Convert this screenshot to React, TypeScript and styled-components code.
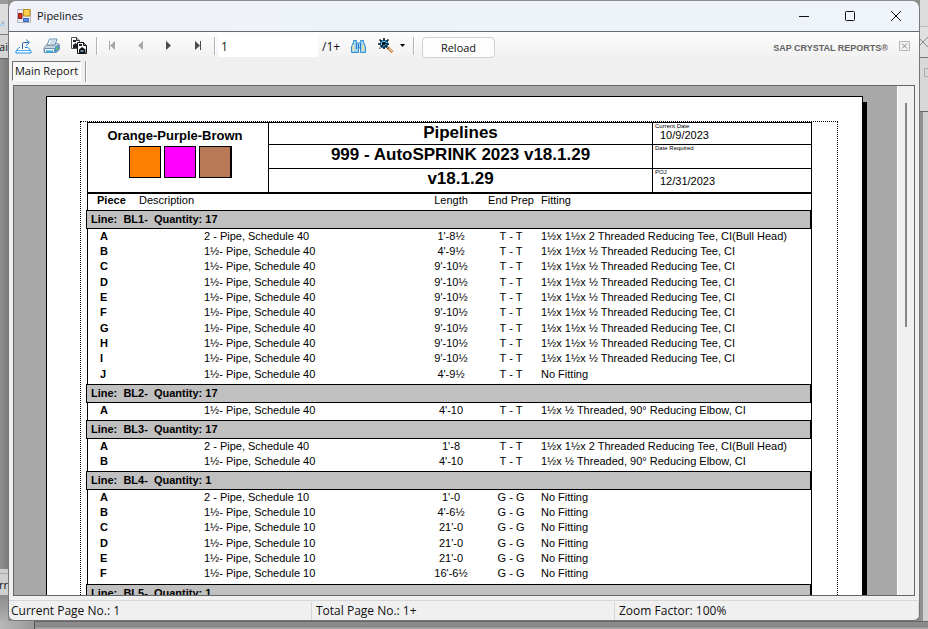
import React from "react";
import styled, { createGlobalStyle } from "styled-components";

const Global = createGlobalStyle`
  *{box-sizing:border-box}
  html,body{margin:0;height:100%}
  body{background:#8d8d8d;font-family:"Open Sans","Noto Sans",sans-serif;font-size:11px;color:#111}
  button,input{font:inherit;color:inherit;margin:0}
`;

const Desktop = styled.div`
  display:grid;
  grid-template-columns:8px minmax(0,1fr) 8px;
  grid-template-rows:minmax(0,1fr) 8px;
  height:100vh;overflow:hidden;
`;
const Strip = styled.div`display:flex;flex-direction:column;overflow:hidden;white-space:nowrap;`;
const Slab = styled.div<{ $h?: number; $bg: string; $line?: string }>`
  flex:${p => (p.$h ? "none" : "1")};
  height:${p => (p.$h ? p.$h + "px" : "auto")};
  background:${p => p.$bg};
  border-bottom:${p => (p.$line ? `1px solid ${p.$line}` : "none")};
  display:flex;align-items:center;overflow:hidden;
`;
const RightAligned = styled(Slab)`justify-content:flex-end;`;
const StripIcon = styled(RightAligned)`padding:8px 3px 0 0;`;
const Floor = styled.div`
  grid-column:1 / -1;display:flex;
  background:linear-gradient(90deg,#b8b8b8,#999 34px,#a4a4a4 36px,#a4a4a4 90%,#bcbcbc);
`;
const FloorPanel = styled.div`
  flex:1;margin-left:34px;border-left:1px solid #555;border-top:1px solid #666;
  background:linear-gradient(#8c8c8c 0 4px,#7f7f7f 4px 5px,#a0a0a0 5px);
`;

const Win = styled.main`
  display:flex;flex-direction:column;min-width:0;min-height:0;
  margin-top:1px;border:1px solid #777;border-top:0;border-radius:8px 8px 6px 6px;
  background:#f0f0f0;overflow:hidden;
`;
const TitleBar = styled.header`
  height:31px;flex:none;display:flex;align-items:center;padding-left:8px;
  background:linear-gradient(90deg,#f0f1f9,#edf3f9 50%,#eff3fa);border-bottom:1px solid #666b70;
`;
const Title = styled.h1`flex:1;margin:0 0 0 6px;font-size:11px;font-weight:400;line-height:16px;`;
const WinButton = styled.button`
  width:46px;height:30px;padding:0;border:0;background:none;display:grid;place-items:center;
`;
const Toolbar = styled.div`
  height:28px;flex:none;display:flex;align-items:center;padding:0 9px 0 0;
  background:linear-gradient(#fdfdfd,#f0f0f0);
`;
const Tool = styled.button<{ $w?: number }>`
  width:${p => p.$w ?? 28}px;height:24px;padding:0;border:0;background:none;flex:none;
  display:flex;align-items:center;justify-content:center;
`;
const Divider = styled.span<{ $before: number; $after: number }>`
  width:2px;height:18px;margin:0 ${p => p.$after}px 0 ${p => p.$before}px;
  border-left:1px solid #b4b4b4;border-right:1px solid #fff;
`;
const PageBox = styled.input`
  width:100px;height:22px;padding:0 3px;border:0;background:#fff;font-size:12px;outline:0;
`;
const PageTotal = styled.span`font-size:12px;margin-left:4px;width:22px;`;
const Reload = styled.button`
  width:73px;height:21px;margin-top:3px;padding:0;border:1px solid #d0d0d0;border-radius:4px;background:#fdfdfd;
  font-size:11px;line-height:18px;
`;
const Brand = styled.span`
  margin:3px 11px 0 auto;font:bold 9px/12px "Liberation Sans",sans-serif;color:#626262;
`;
const Tabs = styled.nav`height:25px;flex:none;display:flex;align-items:flex-start;padding:1px 3px 0;`;
const Tab = styled.button`
  height:20px;width:69px;padding:0;border:1px solid #707070;border-right-color:#fff;border-bottom-color:#fff;background:#f8f8f8;
  font-size:11px;line-height:16px;white-space:nowrap;
`;
const TabEnd = styled.span`width:2px;height:21px;margin-left:4px;border-left:1px solid #999;border-right:1px solid #fff;`;

const Viewer = styled.section`
  flex:1;min-height:0;margin:0 4px;display:flex;border:1px solid #666;background:#a9a9a9;overflow:hidden;
`;
const Canvas = styled.div`flex:1;min-width:0;padding:10px 34px 0 32px;overflow:hidden;`;
const Paper = styled.article`
  border:1px solid #000;background:#fff;padding:24px 24px 0 33px;box-shadow:4px 6px 0 #000;color:#000;
  font-family:"Liberation Sans",Arial,sans-serif;min-height:800px;
`;
const Margins = styled.div`border:1px dotted #000;border-bottom:0;padding:0 25px 0 6px;min-height:760px;`;
const Report = styled.div`border:1px solid #000;border-bottom:0;min-height:740px;`;
const ReportHead = styled.header`
  display:grid;grid-template-columns:180px minmax(0,1fr) 159px;height:71px;border-bottom:2px solid #000;
`;
const Company = styled.div`text-align:center;font:bold 13px/16px "Liberation Sans",sans-serif;padding:5px 6px 0 0;`;
const Swatches = styled.div`display:flex;justify-content:center;gap:3px;margin:2px 0 0 10px;`;
const Swatch = styled.span<{ $c: string; $last?: boolean }>`
  width:${p => (p.$last ? 33 : 32)}px;height:32px;border:1px solid #000;border-right-width:${p => (p.$last ? 2 : 1)}px;background:${p => p.$c};
`;
const HeadRows = styled.div`display:grid;grid-template-rows:21px 24px 24px;border-left:1px solid #000;`;
const HeadTitle = styled.h2`
  margin:0;text-align:center;font-size:17px;line-height:19px;font-weight:700;
  & + &{border-top:1px solid #000}
`;
const DateCell = styled.div`
  line-height:12px;font-size:11px;padding-left:7px;
  & + &{border-top:1px solid #000}
`;
const Tiny = styled.div`font-size:6px;line-height:6px;margin-left:-5px;`;
const Table = styled.table`width:100%;border-collapse:collapse;table-layout:fixed;font-size:11px;`;
const Th = styled.th<{ $center?: boolean; $bold?: boolean; $pad?: number }>`
  height:16px;padding:0 0 4px ${p => p.$pad ?? 0}px;line-height:12px;white-space:nowrap;
  font-weight:${p => (p.$bold ? 700 : 400)};text-align:${p => (p.$center ? "center" : "left")};
`;
const GroupCell = styled.td`padding:0;`;
const Bar = styled.div`
  height:19px;margin-left:-2px;padding-left:4px;border:1px solid #000;background:#c0c0c0;
  font-weight:700;line-height:17px;white-space:pre;
`;
const Line = styled.tr<{ $tall: boolean }>`height:${p => (p.$tall ? 16 : 15)}px;`;
const Td = styled.td<{ $center?: boolean; $bold?: boolean; $pad?: number }>`
  padding:0 0 0 ${p => p.$pad ?? 0}px;line-height:15px;white-space:nowrap;vertical-align:top;
  font-weight:${p => (p.$bold ? 700 : 400)};text-align:${p => (p.$center ? "center" : "left")};
`;
const Gap = styled.td<{ $h: number }>`height:${p => p.$h}px;padding:0;`;
const Col = styled.col<{ $w?: number }>`width:${p => (p.$w ? p.$w + "px" : "auto")};`;
const ScrollTrack = styled.div`width:17px;flex:none;background:#f0f0f0;border-left:1px solid #fff;padding:17px 0 0 7px;`;
const ScrollThumb = styled.div`width:2px;height:224px;background:#858585;`;
const StatusBar = styled.footer`
  flex:none;height:20px;margin-top:4px;border-top:1px solid #d7d7d7;display:grid;
  grid-template-columns:303px 303px 1fr;align-items:center;font-size:12px;line-height:18px;
`;
const StatusCell = styled.span`
  padding-left:2px;border-right:1px solid #d7d7d7;white-space:nowrap;
  & + &{padding-left:4px}
`;

const AppIcon = () => (
  <svg width="14" height="14" viewBox="0 0 14 14">
    <path d="M.5.5h13v13H.5z" fill="#e9e9ee" stroke="#b5b5bd" />
    <path d="M6.500.500h6.500v6.500h-6.500z" fill="#fcd04b" stroke="#b58a1c" />
    <path d="M1.500 4.500h3.500v5h-3.500z" fill="#d2301f" stroke="#8c1b12" />
    <path d="M6.500 9.500h5v3h-5z" fill="#5c8fe8" stroke="#3665c0" />
  </svg>
);
const ExportIcon = () => (
  <svg width="17" height="15" viewBox="0 0 17 15" fill="none">
    <path d="M7.500 9.500V4.500q0-1 1-1h5" stroke="#1f5f9c" />
    <path d="M11 .5l3.500 3-3.500 3" stroke="#1c74c8" />
    <path d="M5 8.500H4L1 12v2h15v-2l-3-3.500H10" stroke="#1f8fec" fill="#fff" />
    <path d="M1 11.500h15" stroke="#4aa9f2" />
    <path d="M7.500 10V6" stroke="#1f5f9c" />
  </svg>
);
const PrintIcon = () => (
  <svg width="17" height="16" viewBox="0 0 17 16">
    <path d="M4 7l2.500-6h7.500l-2 6z" fill="#fff" stroke="#5d92b6" />
    <path d="M7.500 3h5M7 5h5" stroke="#8eb9d4" />
    <path d="M1 10l3-4h1l-.5 1.500h7l2-2h2l1 1v5l-3 3H1z" fill="#c9d6e0" stroke="#8597a8" />
    <path d="M12 8.500l4-2v5l-4 3.500z" fill="#4798c9" />
    <path d="M1.500 10.500h10v4h-10z" fill="#eaf3f8" stroke="#6d93ad" />
    <path d="M3 13.500h7" stroke="#3da8df" strokeWidth="2" />
    <path d="M13 9.500h2v2h-2z" fill="#6fc24c" />
  </svg>
);
const CopyIcon = () => (
  <svg width="18" height="18" viewBox="0 0 18 18">
    <path d="M1.500.500h5l3 3v8h-8z" fill="#fff" stroke="#555" />
    <path d="M3 3h3v2H3z" fill="#1c2026" />
    <path d="M3 8l2.500-2L8 8v3H3z" fill="#1c2026" />
    <path d="M6.500.500v3h3" fill="#bbb" stroke="#333" />
    <path d="M7.500 5.500h6l3 3v8h-9z" fill="#fff" stroke="#111" />
    <path d="M9 7h3v2H9z" fill="#1c2026" />
    <path d="M9 12.500l3-2.500 3.500 2.500V16H9z" fill="#111" />
    <path d="M10.500 14h3" stroke="#86b9dc" strokeWidth="1.500" />
    <path d="M13.500 5.500v3h3" fill="#999" stroke="#111" />
  </svg>
);
const NavIcon = ({ kind, dim }: { kind: "first" | "prev" | "next" | "last"; dim?: boolean }) => (
  <svg width="9" height="10" viewBox="0 0 9 10" fill={dim ? "#a7a7a7" : "#4a4a4a"}>
    {(kind === "first" || kind === "prev") && <path d="M7 0v9L2 4.500z" />}
    {(kind === "next" || kind === "last") && <path d="M2 0v9l5-4.500z" />}
    {kind === "first" && <path d="M1 0h1v9H1z" />}
    {kind === "last" && <path d="M7 0h1v9H7z" />}
  </svg>
);
const FindIcon = () => (
  <svg width="15" height="13" viewBox="0 0 15 13">
    <path d="M.5 12.500V7l2-5V.5h3V2l1 1h2l1-1V.5h3V2l2 5v5.500h-5V8h-2v4.500z" fill="#9fd3f3" stroke="#328fce" />
    <path d="M2.500 5v6M12 5v6" stroke="#e4e3b0" strokeWidth="2" />
    <path d="M5.500 3v6M9.500 3v6M7.500 4v4" stroke="#2877cf" />
  </svg>
);
const ZoomIcon = () => (
  <svg width="16" height="16" viewBox="0 0 16 16">
    <path d="M9.500 9.500l5 4.500" stroke="#b77b3d" strokeWidth="3" />
    <path d="M10.500 10l4 3.500" stroke="#f4c78e" strokeWidth="1.400" />
    <circle cx="6" cy="6" r="4" fill="#5cc4f4" stroke="#2f8fc6" />
    <path d="M6 0v12M0 6h12M1.500 1.500l9 9M10.500 1.500l-9 9" stroke="#07131f" strokeWidth="1.600" strokeDasharray="3 1" />
  </svg>
);
const CloseTabIcon = () => (
  <svg width="11" height="10" viewBox="0 0 11 10" fill="none" stroke="#b4b4b4">
    <path d="M.5.500h10v9H.5z" fill="#f3f3f3" />
    <path d="M3 2.500l5 5M8 2.500l-5 5" stroke="#888" />
  </svg>
);

type Row = [string, string, string, string, string];
type Group = { name: string; qty: number; rows: Row[] };

const P15 = "1½- Pipe, Schedule 40";
const P20 = "2 - Pipe, Schedule 40";
const P15L = "1½- Pipe, Schedule 10";
const TEE = "1½x 1½x ½ Threaded Reducing Tee, CI";
const BULL = "1½x 1½x 2 Threaded Reducing Tee, CI(Bull Head)";
const ELBOW = "1½x ½ Threaded, 90° Reducing Elbow, CI";

const groups: Group[] = [
  {
    name: "BL1", qty: 17,
    rows: [
      ["A", P20, "1'-8½", "T - T", BULL],
      ["B", P15, "4'-9½", "T - T", TEE],
      ...["C", "D", "E", "F", "G", "H", "I"].map((p): Row => [p, P15, "9'-10½", "T - T", TEE]),
      ["J", P15, "4'-9½", "T - T", "No Fitting"],
    ],
  },
  { name: "BL2", qty: 17, rows: [["A", P15, "4'-10", "T - T", ELBOW]] },
  { name: "BL3", qty: 17, rows: [["A", P20, "1'-8", "T - T", BULL], ["B", P15, "4'-10", "T - T", ELBOW]] },
  {
    name: "BL4", qty: 1,
    rows: [
      ["A", "2 - Pipe, Schedule 10", "1'-0", "G - G", "No Fitting"],
      ["B", P15L, "4'-6½", "G - G", "No Fitting"],
      ...["C", "D", "E"].map((p): Row => [p, P15L, "21'-0", "G - G", "No Fitting"]),
      ["F", P15L, "16'-6½", "G - G", "No Fitting"],
    ],
  },
  { name: "BL5", qty: 1, rows: [] },
];

export default function App() {
  return (
    <Desktop>
      <Global />
      <Strip>
        <Slab $h={4} $bg="#9a9a9a" />
        <StripIcon $h={31} $bg="#dcdcdc" $line="#777"><ExportIcon /></StripIcon>
        <RightAligned $h={24} $bg="#d4d4d4" $line="#666">ai</RightAligned>
        <Slab $bg="linear-gradient(90deg,#8f8f8f,#7c7c7c)" />
        <Slab $h={5} $bg="#cfcfcf" $line="#aaa" />
        <RightAligned $h={21} $bg="#cfcfcf">rr</RightAligned>
        <Slab $h={26} $bg="linear-gradient(#8c8c8c,#b0b0b0)" />
      </Strip>
      <Win>
        <TitleBar>
          <AppIcon />
          <Title>Pipelines</Title>
          <WinButton aria-label="Minimize"><svg width="10" height="10" viewBox="0 0 10 10"><path d="M0 5.500h10" stroke="#111" /></svg></WinButton>
          <WinButton aria-label="Maximize"><svg width="10" height="10" viewBox="0 0 10 10"><rect x=".5" y=".5" width="9" height="9" rx="1" fill="none" stroke="#111" /></svg></WinButton>
          <WinButton aria-label="Close"><svg width="10" height="10" viewBox="0 0 10 10"><path d="M0 0l10 10M10 0L0 10" stroke="#111" /></svg></WinButton>
        </TitleBar>
        <Toolbar>
          <Tool aria-label="Export"><ExportIcon /></Tool>
          <Tool aria-label="Print"><PrintIcon /></Tool>
          <Tool aria-label="Copy"><CopyIcon /></Tool>
          <Divider $before={3} $after={0} />
          <Tool aria-label="First page"><NavIcon kind="first" dim /></Tool>
          <Tool aria-label="Previous page"><NavIcon kind="prev" dim /></Tool>
          <Tool $w={29} aria-label="Next page"><NavIcon kind="next" /></Tool>
          <Tool aria-label="Last page"><NavIcon kind="last" /></Tool>
          <Divider $before={3} $after={2} />
          <PageBox aria-label="Page number" defaultValue="1" />
          <PageTotal>/1+</PageTotal>
          <Tool aria-label="Find"><FindIcon /></Tool>
          <Tool $w={40} aria-label="Zoom">
            <ZoomIcon />
            <svg width="12" height="6" viewBox="0 0 12 6"><path d="M6 1h5L8.500 4z" fill="#000" /></svg>
          </Tool>
          <Divider $before={1} $after={7} />
          <Reload>Reload</Reload>
          <Brand>SAP CRYSTAL REPORTS®</Brand>
          <Tool $w={11} aria-label="Close view"><CloseTabIcon /></Tool>
        </Toolbar>
        <Tabs><Tab>Main Report</Tab><TabEnd /></Tabs>
        <Viewer>
          <Canvas>
            <Paper>
              <Margins>
                <Report>
                  <ReportHead>
                    <Company>
                      Orange-Purple-Brown
                      <Swatches><Swatch $c="#ff8000" /><Swatch $c="#ff00ff" /><Swatch $c="#b87957" $last /></Swatches>
                    </Company>
                    <HeadRows>
                      <HeadTitle>Pipelines</HeadTitle>
                      <HeadTitle>999 - AutoSPRINK 2023 v18.1.29</HeadTitle>
                      <HeadTitle>v18.1.29</HeadTitle>
                    </HeadRows>
                    <HeadRows>
                      <DateCell><Tiny>Current Date</Tiny>10/9/2023</DateCell>
                      <DateCell><Tiny>Date Required</Tiny></DateCell>
                      <DateCell><Tiny>POJ</Tiny>12/31/2023</DateCell>
                    </HeadRows>
                  </ReportHead>
                  <Table>
                    <colgroup>
                      <Col $w={51} /><Col $w={282} /><Col $w={60} /><Col $w={60} /><Col />
                    </colgroup>
                    <thead>
                      <tr>
                        <Th $bold $pad={9}>Piece</Th><Th>Description</Th><Th $center>Length</Th><Th $center>End Prep</Th><Th>Fitting</Th>
                      </tr>
                    </thead>
                    {groups.map(g => (
                      <tbody key={g.name}>
                        <tr><GroupCell colSpan={5}><Bar>{`Line:  ${g.name}-  Quantity: ${g.qty}`}</Bar></GroupCell></tr>
                        {g.rows.map((r, i) => (
                          <Line key={r[0]} $tall={i % 3 === 2}>
                            <Td $bold $pad={12}>{r[0]}</Td><Td $pad={65}>{r[1]}</Td><Td $center>{r[2]}</Td><Td $center>{r[3]}</Td><Td>{r[4]}</Td>
                          </Line>
                        ))}
                        <tr><Gap $h={2} colSpan={5} /></tr>
                      </tbody>
                    ))}
                  </Table>
                </Report>
              </Margins>
            </Paper>
          </Canvas>
          <ScrollTrack><ScrollThumb /></ScrollTrack>
        </Viewer>
        <StatusBar>
          <StatusCell>Current Page No.: 1</StatusCell><StatusCell>Total Page No.: 1+</StatusCell><StatusCell>Zoom Factor: 100%</StatusCell>
        </StatusBar>
      </Win>
      <Strip>
        <Slab $h={27} $bg="#dcdcdc" $line="#bbb" />
        <Slab $h={31} $bg="#e0e0e0" $line="#777">
          <svg width="8" height="10" viewBox="0 0 8 10"><path d="M-2 0l10 10M8 0L-2 10" stroke="#888" /></svg>
        </Slab>
        <RightAligned $h={54} $bg="#d8d8d8" $line="#666">
          <svg width="4" height="34" viewBox="0 0 4 34"><path d="M4.500.500h-4v8h4" fill="none" stroke="#aaa" /></svg>
        </RightAligned>
        <Slab $bg="linear-gradient(90deg,#8f8f8f 0 3px,#d0d0d0 3px)" />
      </Strip>
      <Floor><FloorPanel /></Floor>
    </Desktop>
  );
}
